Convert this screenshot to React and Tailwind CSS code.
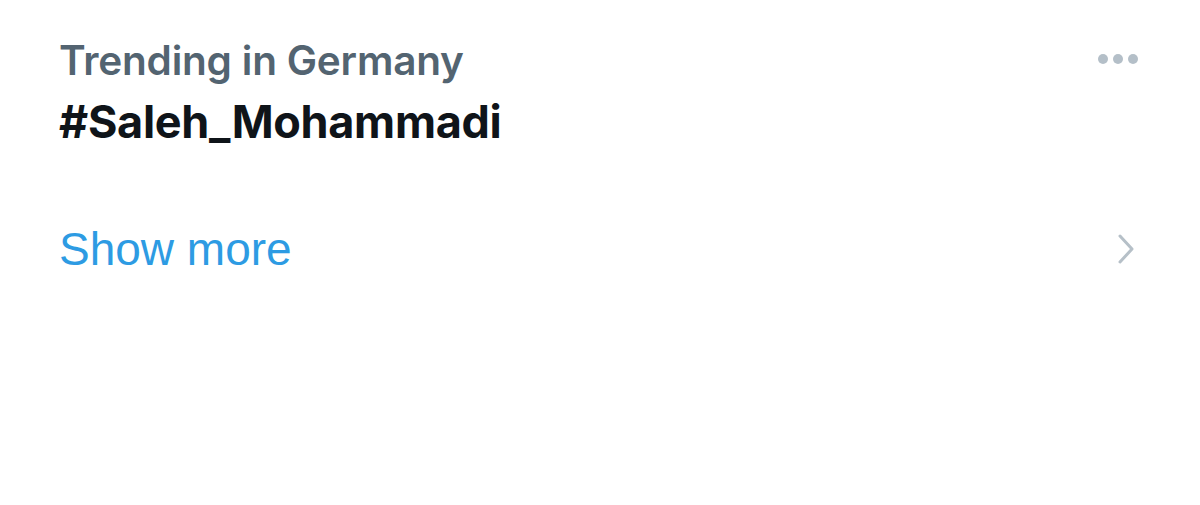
import React from 'react'

const Dots = () => (
  <div className="flex items-center gap-[5px]">
    <span className="w-[10px] h-[10px] rounded-full bg-[#b4bfc8]" />
    <span className="w-[10px] h-[10px] rounded-full bg-[#b4bfc8]" />
    <span className="w-[10px] h-[10px] rounded-full bg-[#b4bfc8]" />
  </div>
)

const Chevron = () => (
  <svg width="20" height="32" viewBox="0 0 20 32" fill="none">
    <path d="M4 3 L16 16 L4 29" stroke="#b6c0c8" strokeWidth="3" strokeLinecap="round" strokeLinejoin="round" />
  </svg>
)

export default function App() {
  return (
    <div className="w-[1200px] h-[505px] bg-white overflow-hidden">
      <div className="pl-[59px] pr-[62px] pt-[36px]">
        <div className="flex items-start justify-between">
          <div className="flex flex-col">
            <div className="text-[40.5px] leading-[50px] font-semibold text-[#536471] font-['Inter',sans-serif] tracking-[-0.2px]">
              Trending in Germany
            </div>
            <div className="mt-[7px] text-[45px] leading-[58px] font-bold text-[#0f1419] font-['Inter',sans-serif] tracking-[-0.3px]">
              #Saleh_Mohammadi
            </div>
          </div>
          <div className="pt-[18px]">
            <Dots />
          </div>
        </div>
        <div className="mt-[70px] flex items-center justify-between">
          <div className="text-[46px] leading-[56px] text-[#2d9be3] font-['Liberation_Sans',Arial,sans-serif]">
            Show more
          </div>
          <div className="pr-[2px]">
            <Chevron />
          </div>
        </div>
      </div>
    </div>
  )
}
